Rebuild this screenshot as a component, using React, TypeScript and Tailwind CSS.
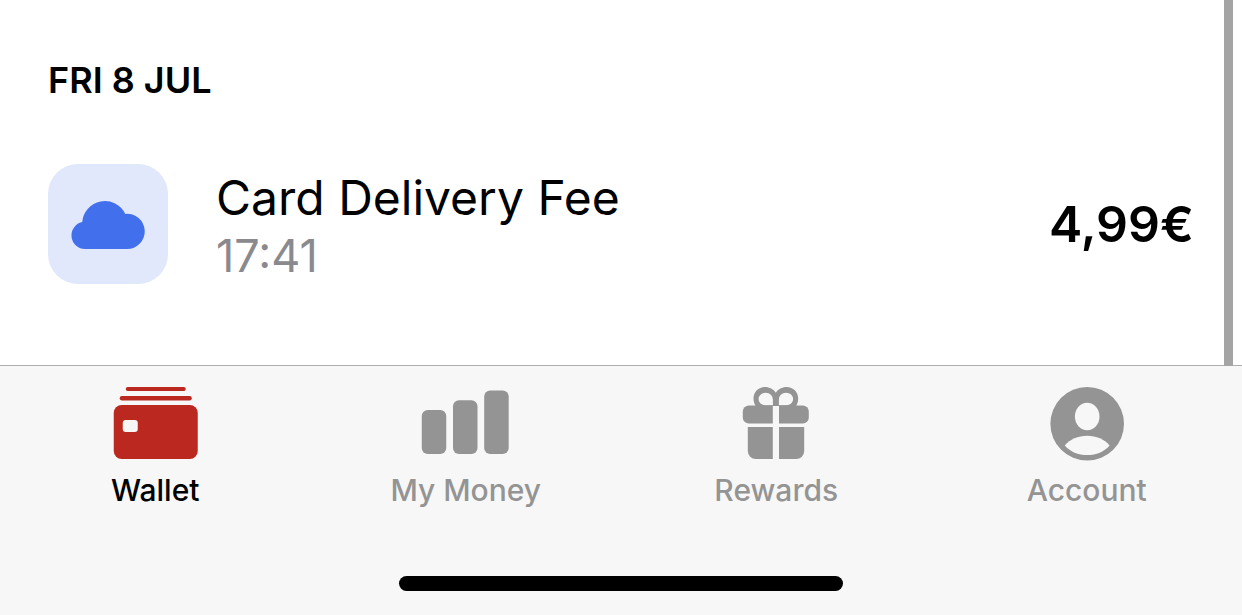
import type { ReactNode } from 'react'

const tabs: { label: string; href: string; active?: boolean; icon: ReactNode }[] = [
  { label: 'Wallet', href: '#wallet', active: true, icon: <WalletIcon /> },
  { label: 'My Money', href: '#money', icon: <MoneyIcon /> },
  { label: 'Rewards', href: '#rewards', icon: <RewardsIcon /> },
  { label: 'Account', href: '#account', icon: <AccountIcon /> },
]

function WalletIcon() {
  return (
    <svg width="96" height="76" viewBox="0 0 96 76" fill="#ba2820" aria-hidden="true">
      <rect x="18.75" y="1" width="60" height="4" rx="2" />
      <rect x="12.75" y="10" width="72" height="4.5" rx="2.2" />
      <rect x="6.75" y="19" width="84" height="54" rx="8" />
      <rect x="15.75" y="34" width="15" height="12" rx="3" fill="#f7f7f7" />
    </svg>
  )
}

function MoneyIcon() {
  return (
    <svg width="96" height="76" viewBox="0 0 96 76" fill="#949494" aria-hidden="true">
      <rect x="3.75" y="24" width="24.5" height="44" rx="6" />
      <rect x="35" y="14.3" width="24.5" height="53.7" rx="6" />
      <rect x="66.2" y="4.5" width="24.5" height="63.5" rx="6" />
    </svg>
  )
}

function RewardsIcon() {
  return (
    <svg width="96" height="76" viewBox="0 0 96 76" fill="#949494" aria-hidden="true">
      <path
        fillRule="evenodd"
        d="M27.6 20C26.3 17.8 25.5 15.3 25.5 12.5C25.5 6 30.5 1 37 1C41.5 1 45.6 3.2 47.8 6.8C50 3.2 54.1 1 58.6 1C65.1 1 70.2 6 70.2 12.5C70.2 15.3 69.4 17.8 68.1 20ZM44.9 19.3V14C44.9 9.8 41.8 6.8 37.7 6.8C33.6 6.8 30.6 9.6 30.6 13.1C30.6 16.6 33.6 19.3 37.5 19.3ZM50.9 19.3H58.2C62.1 19.3 65.1 16.6 65.1 13.1C65.1 9.6 62.1 6.8 58 6.8C53.9 6.8 50.9 9.8 50.9 14Z"
      />
      <path d="M44.8 19.5H20.8A6 6 0 0 0 14.8 25.5V31.5A6 6 0 0 0 20.8 37.5H44.8Z" />
      <path d="M51 19.5H74.8A6 6 0 0 1 80.8 25.5V31.5A6 6 0 0 1 74.8 37.5H51Z" />
      <path d="M19.8 41H44.8V73H27.8A8 8 0 0 1 19.8 65Z" />
      <path d="M51 41H76.2V65A8 8 0 0 1 68.2 73H51Z" />
    </svg>
  )
}

function AccountIcon() {
  return (
    <svg width="96" height="76" viewBox="0 0 96 76" fill="#949494" aria-hidden="true">
      <circle cx="48.2" cy="37.8" r="36.8" />
      <ellipse cx="48.2" cy="30.5" rx="12.3" ry="13.8" fill="#f7f7f7" />
      <path d="M25.8 59.4C31 53.2 39 49.7 48.2 49.7C57.4 49.7 65.4 53.2 70.6 59.4C65.4 65.6 57.2 69 48.2 69C39.2 69 31 65.6 25.8 59.4Z" fill="#f7f7f7" />
    </svg>
  )
}

function CloudIcon() {
  return (
    <svg width="120" height="120" viewBox="0 0 120 120" aria-hidden="true">
      <path
        fill="#4270ec"
        d="M37 85A13.6 13.6 0 0 1 34.2 58.1A22.7 22.7 0 0 1 77.3 49.9A17.6 17.6 0 1 1 79 85Z"
      />
    </svg>
  )
}

export default function App() {
  return (
    <div className="flex min-h-screen flex-col bg-white font-['Inter',sans-serif] text-black">
      <main className="relative px-12 pt-14 pb-[81px]">
        <h2 className="text-4xl leading-12 font-semibold">FRI 8 JUL</h2>

        <div className="mt-15 flex items-center">
          <div className="size-30 shrink-0 overflow-hidden rounded-[30px] bg-[#e1e8fb]">
            <CloudIcon />
          </div>
          <div className="ml-12 min-w-0 flex-1">
            <p className="text-5xl leading-16">Card Delivery Fee</p>
            <p className="text-[45px] leading-13 text-[#8a8a8e]">17:41</p>
          </div>
          <p className="text-[50px] leading-15 font-semibold">4,99€</p>
        </div>

        {/* scroll indicator */}
        <div className="absolute top-0 right-[9px] -bottom-px w-[9px] bg-[#a4a4a4]" />
      </main>

      <footer className="flex flex-1 flex-col justify-between border-t border-[#adadad] bg-[#f7f7f7] pt-5 pb-6">
        <nav className="grid grid-cols-4">
          {tabs.map((tab) => (
            <a
              key={tab.label}
              href={tab.href}
              aria-current={tab.active ? 'page' : undefined}
              className={`flex flex-col items-center gap-2 text-3xl leading-10 font-medium ${
                tab.active ? 'text-black' : 'text-[#949494]'
              }`}
            >
              {tab.icon}
              {tab.label}
            </a>
          ))}
        </nav>
        <div className="mx-auto h-[15px] w-[444px] rounded-full bg-black" />
      </footer>
    </div>
  )
}
